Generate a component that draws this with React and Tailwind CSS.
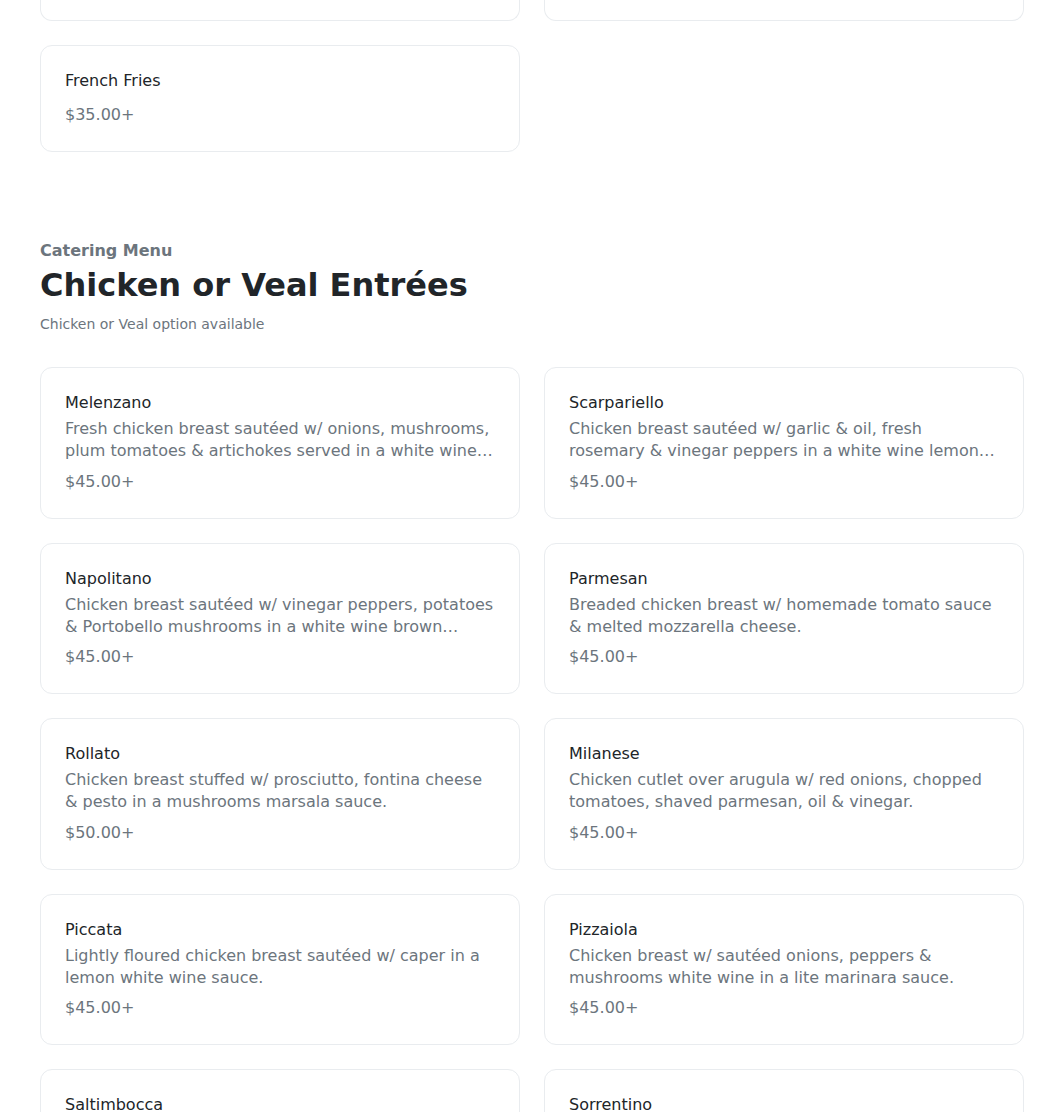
import React from "react";

const items = [
  { name: "Melenzano", desc: "Fresh chicken breast sautéed w/ onions, mushrooms, plum tomatoes & artichokes served in a white wine lemon sauce.", price: "$45.00+" },
  { name: "Scarpariello", desc: "Chicken breast sautéed w/ garlic & oil, fresh rosemary & vinegar peppers in a white wine lemon sauce.", price: "$45.00+" },
  { name: "Napolitano", desc: "Chicken breast sautéed w/ vinegar peppers, potatoes & Portobello mushrooms in a white wine brown sauce.", price: "$45.00+" },
  { name: "Parmesan", desc: "Breaded chicken breast w/ homemade tomato sauce & melted mozzarella cheese.", price: "$45.00+" },
  { name: "Rollato", desc: "Chicken breast stuffed w/ prosciutto, fontina cheese & pesto in a mushrooms marsala sauce.", price: "$50.00+" },
  { name: "Milanese", desc: "Chicken cutlet over arugula w/ red onions, chopped tomatoes, shaved parmesan, oil & vinegar.", price: "$45.00+" },
  { name: "Piccata", desc: "Lightly floured chicken breast sautéed w/ caper in a lemon white wine sauce.", price: "$45.00+" },
  { name: "Pizzaiola", desc: "Chicken breast w/ sautéed onions, peppers & mushrooms white wine in a lite marinara sauce.", price: "$45.00+" },
  { name: "Saltimbocca", desc: "Chicken breast topped w/ prosciutto & mozzarella in a white wine sage sauce.", price: "$45.00+" },
  { name: "Sorrentino", desc: "Chicken breast topped w/ eggplant, prosciutto & mozzarella in a brown sauce.", price: "$45.00+" },
];

function Card({ name, desc, price }) {
  return (
    <div className="rounded-xl border border-[#e9ecef] bg-white px-6 pt-[23px] pb-6">
      <div className="text-base leading-6 text-[#212529]">{name}</div>
      {desc ? (
        <>
          <div className="mt-[3px] line-clamp-2 text-base leading-[22px] text-[#6c757d]">{desc}</div>
          <div className="mt-[7.5px] text-base leading-6 text-[#6c757d]">{price}</div>
        </>
      ) : (
        <div className="mt-[9.5px] text-base leading-6 text-[#6c757d]">{price}</div>
      )}
    </div>
  );
}

export default function App() {
  return (
    <div className="h-[1112px] overflow-hidden bg-white pl-10 pr-5" style={{ fontFamily: '"DejaVu Sans", sans-serif' }}>
      <div className="grid grid-cols-2 gap-6">
        <div className="h-[21px] rounded-b-xl border-x border-b border-[#e9ecef]" />
        <div className="h-[21px] rounded-b-xl border-x border-b border-[#e9ecef]" />
        <Card name="French Fries" price="$35.00+" />
      </div>
      <section className="pt-[87.5px]">
        <div className="text-base font-bold leading-6 text-[#6c757d]">Catering Menu</div>
        <h2 className="mt-0.5 text-[32px] font-bold leading-10 text-[#212529]">Chicken or Veal Entrées</h2>
        <p className="mt-[9px] text-sm leading-5 text-[#6c757d]">Chicken or Veal option available</p>
        <div className="mt-[33px] grid grid-cols-2 gap-6">
          {items.map((it) => (
            <Card key={it.name} {...it} />
          ))}
        </div>
      </section>
    </div>
  );
}
